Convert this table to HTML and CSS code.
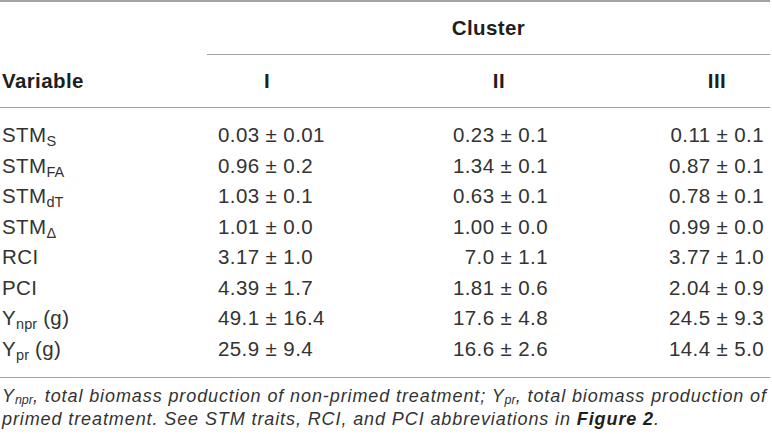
FILE: index.html
```html
<!DOCTYPE html>
<html lang="en">
<head>
  <meta charset="UTF-8" />
  <title>Cluster table</title>
  <link rel="stylesheet" href="styles.css">
</head>
<body>
  <table class="data">
    <colgroup>
      <col class="c-var">
      <col class="c-one">
      <col class="c-two">
      <col class="c-three">
    </colgroup>
    <thead>
      <tr class="group">
        <th></th>
        <th colspan="3" class="cluster">Cluster</th>
      </tr>
      <tr class="cols">
        <th class="var">Variable</th>
        <th class="one">I</th>
        <th class="two">II</th>
        <th class="three">III</th>
      </tr>
    </thead>
    <tbody>
      <tr><td>STM<sub>S</sub></td><td class="one">0.03 ± 0.01</td><td class="two">0.23 ± 0.1</td><td class="three">0.11 ± 0.1</td></tr>
      <tr><td>STM<sub>FA</sub></td><td class="one">0.96 ± 0.2</td><td class="two">1.34 ± 0.1</td><td class="three">0.87 ± 0.1</td></tr>
      <tr><td>STM<sub>dT</sub></td><td class="one">1.03 ± 0.1</td><td class="two">0.63 ± 0.1</td><td class="three">0.78 ± 0.1</td></tr>
      <tr><td>STM<sub>Δ</sub></td><td class="one">1.01 ± 0.0</td><td class="two">1.00 ± 0.0</td><td class="three">0.99 ± 0.0</td></tr>
      <tr><td>RCI</td><td class="one">3.17 ± 1.0</td><td class="two">7.0 ± 1.1</td><td class="three">3.77 ± 1.0</td></tr>
      <tr><td>PCI</td><td class="one">4.39 ± 1.7</td><td class="two">1.81 ± 0.6</td><td class="three">2.04 ± 0.9</td></tr>
      <tr><td>Y<sub>npr</sub> (g)</td><td class="one">49.1 ± 16.4</td><td class="two">17.6 ± 4.8</td><td class="three">24.5 ± 9.3</td></tr>
      <tr><td>Y<sub>pr</sub> (g)</td><td class="one">25.9 ± 9.4</td><td class="two">16.6 ± 2.6</td><td class="three">14.4 ± 5.0</td></tr>
    </tbody>
  </table>
  <p class="note">Y<sub>npr</sub>, total biomass production of non-primed treatment; Y<sub>pr</sub>, total biomass production of primed treatment. See STM traits, RCI, and PCI abbreviations in <b>Figure 2</b>.</p>
</body>
</html>
```

FILE: styles.css
```css
* { margin: 0; padding: 0; box-sizing: border-box; }
body {
  font-family: 'Liberation Sans', Arial, sans-serif;
  background: #fff;
  color: #262626;
  width: 772px;
  overflow: hidden;
}
.data {
  width: 770px;
  table-layout: fixed;
  border-collapse: collapse;
  border-top: 2px solid #a3a3a3;
  font-size: 20.5px;
  letter-spacing: 0.4px;
}
.c-var { width: 207px; }
.c-one { width: 120px; }
.c-two { width: 232px; }
.c-three { width: 211px; }
th {
  font-weight: bold;
  color: #1e1e1e;
  line-height: 22px;
  padding: 15px 0;
  white-space: nowrap;
}
.cluster {
  text-align: center;
  border-bottom: 1.5px solid #a3a3a3;
}
.cols th { border-bottom: 1.5px solid #a3a3a3; }
.cols .var { text-align: left; padding-left: 2px; }
.cols .one { text-align: center; }
.cols .two { text-align: right; padding-right: 54px; }
.cols .three { text-align: center; padding-left: 105px; }
td {
  color: #333;
  line-height: 22px;
  padding: 4.25px 0;
  white-space: nowrap;
}
td:first-child { padding-left: 2px; }
td.one { padding-left: 11px; }
td.two { text-align: right; padding-right: 11px; }
td.three { text-align: right; padding-right: 6px; }
tbody tr:first-child td { padding-top: 16px; }
tbody tr:last-child td { padding-bottom: 17px; border-bottom: 1.5px solid #a3a3a3; }
sub {
  font-size: 14.5px;
  letter-spacing: 0;
  line-height: 0;
  vertical-align: -4px;
}
.note {
  font-style: italic;
  color: #333;
  font-size: 18px;
  letter-spacing: 0.9px;
  line-height: 23.5px;
  padding: 7px 0 0 2px;
}
.note sub { font-size: 12.5px; vertical-align: -2px; }
.note b { font-weight: bold; color: #1e1e1e; }
```
